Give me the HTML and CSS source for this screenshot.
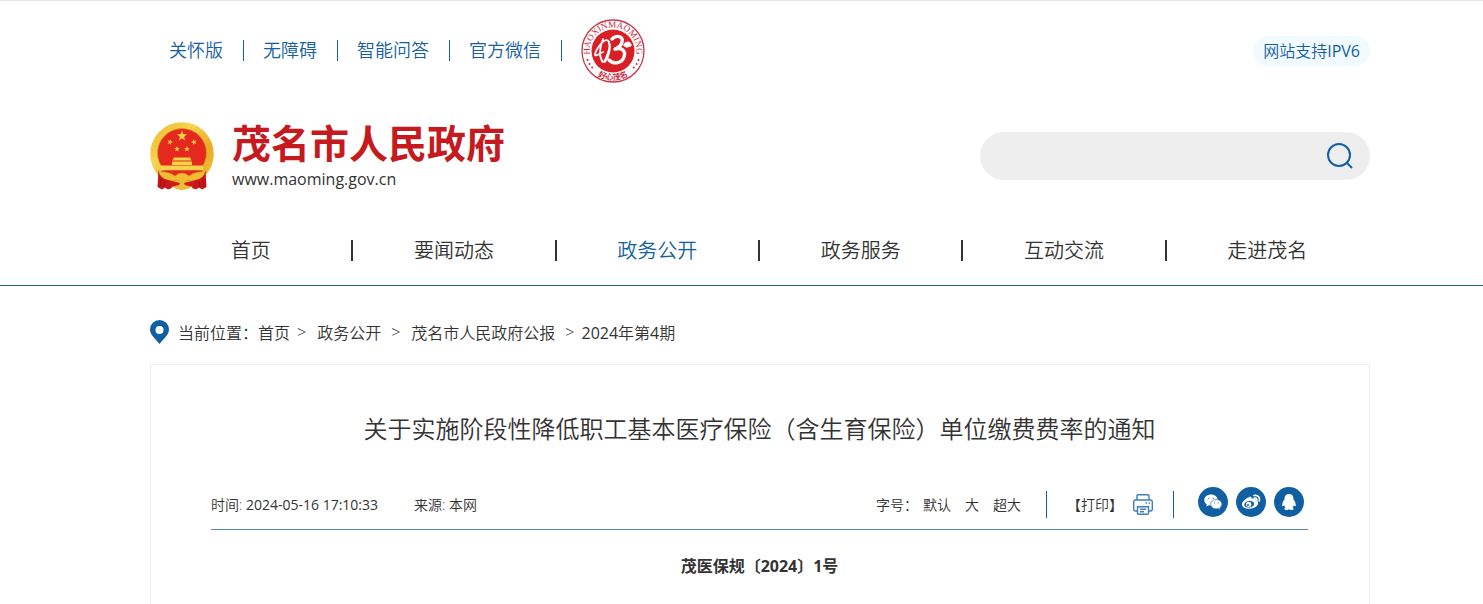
FILE: index.html
```html
<!DOCTYPE html>
<html lang="zh-CN">
<head>
  <meta charset="utf-8">
  <title>关于实施阶段性降低职工基本医疗保险（含生育保险）单位缴费费率的通知</title>
  <link rel="stylesheet" href="styles.css">
</head>
<body>
  <header class="header">
    <div class="wrap topbar">
      <ul class="top-links">
        <li><a href="#">关怀版</a></li>
        <li><a href="#">无障碍</a></li>
        <li><a href="#">智能问答</a></li>
        <li><a href="#">官方微信</a></li>
      </ul>
      <a class="stamp" href="#" aria-label="好心茂名">
        <svg width="64" height="64" viewBox="0 0 64 64">
          <defs>
            <path id="arc-top" d="M9.4 38 A23.4 23.4 0 1 1 54.6 38"/>
            <path id="arc-bottom" d="M11 52.3 A29.2 29.2 0 0 0 53 52.3"/>
          </defs>
          <circle cx="32" cy="32" r="31" fill="#fff" stroke="#c9344c" stroke-width="1.3"/>
          <circle cx="32" cy="32" r="21.5" fill="#d91f26"/>
          <text class="stamp-en"><textPath href="#arc-top" startOffset="50%" text-anchor="middle">HAOXINMAOMING</textPath></text>
          <text class="stamp-cn"><textPath href="#arc-bottom" startOffset="50%" text-anchor="middle">好心茂名</textPath></text>
          <g fill="#c8283c">
            <circle cx="6.5" cy="41" r="1"/><circle cx="8.5" cy="45" r="1"/><circle cx="11.2" cy="48.5" r="1"/>
            <circle cx="57.5" cy="41" r="1"/><circle cx="55.5" cy="45" r="1"/><circle cx="52.8" cy="48.5" r="1"/>
          </g>
          <g fill="none" stroke="#fff" stroke-linecap="round" stroke-linejoin="round">
            <path stroke-width="1.8" d="M22 20 C19 28 18 37 21 42 C22 44 24 42 25 39 C28 32 30 27 28 23 C26 19 22 22 19 26 C16 30 14 33 14 36 C16 38 19 34 22 33"/>
            <path stroke-width="1.8" d="M28 23 C30 29 28 38 24 43"/>
            <path stroke-width="3.4" d="M31 20 C36 15 43 18 41 23 C40 27 37 29 34 30 C41 28 45 32 43 38 C41 44 33 46 28 41"/>
            <path stroke-width="3.4" d="M44 26 C46 23 48 24 49 26 L46 27"/>
          </g>
        </svg>
      </a>
      <a class="ipv6" href="#">网站支持<span class="num">IPV6</span></a>
    </div>

    <div class="wrap brand-row">
      <a class="brand" href="#">
        <svg width="64" height="68" viewBox="0 0 64 68">
          <defs>
            <linearGradient id="gold" x1="0" y1="0" x2="1" y2="1">
              <stop offset="0" stop-color="#edb52c"/>
              <stop offset=".35" stop-color="#f8d651"/>
              <stop offset=".65" stop-color="#e9ae26"/>
              <stop offset="1" stop-color="#f3c43a"/>
            </linearGradient>
            <path id="star" d="M0 -5.4 L1.3 -1.7 5.1 -1.7 2.1 .7 3.2 4.4 0 2.2 -3.2 4.4 -2.1 .7 -5.1 -1.7 -1.3 -1.7Z"/>
          </defs>
          <circle cx="32" cy="32" r="31.8" fill="url(#gold)"/>
          <circle cx="32" cy="32" r="28" fill="none" stroke="#d99b20" stroke-width="1" stroke-dasharray="2 3" opacity=".3"/>
          <circle cx="32" cy="31" r="24.5" fill="#e6291f" stroke="#d8951f" stroke-width=".8"/>
          <g fill="#f8d34a">
            <use href="#star" x="32" y="14"/>
            <use href="#star" transform="translate(20 20) rotate(20) scale(.55)"/>
            <use href="#star" transform="translate(44 20) rotate(-20) scale(.55)"/>
            <use href="#star" transform="translate(27 27) scale(.55)"/>
            <use href="#star" transform="translate(37 27) scale(.55)"/>
            <path d="M24 35.5h16l1.5 3h-19z M22 39.5h20v3.5h-20z M11 43.5h42v5h-42z"/>
          </g>
          <path d="M23 39.2h18" stroke="#d88f1c" stroke-width=".7"/>
          <path d="M11 48.5H53L46 57H18Z" fill="#e6291f"/>
          <path d="M8 50 Q18 49 25 54 Q28 51 32 51 Q36 51 39 54 Q46 49 56 50 L52 55 Q45 61 38 58 L32 60 26 58 Q19 61 12 55Z" fill="#f0bd35" stroke="#d28e1d" stroke-width=".5"/>
          <path d="M8.5 48 Q9 57 20 58.5 L22 66 18 67.5 15 65.5 12 67.5 7.5 65Z M55.5 48 Q55 57 44 58.5 L42 66 46 67.5 49 65.5 52 67.5 56.5 65Z" fill="#c9161b"/>
          <path d="M11 57l-1 8M15 59l-1 6M53 57l1 8M49 59l1 6" stroke="#90100f" stroke-width=".8"/>
          <path d="M23 60 Q32 56 41 60 L43 64 Q37 68 32 68 Q27 68 21 64Z" fill="#efbb32"/>
          <path d="M20 58.5 L30 61 29 63 21 65Z M44 58.5 L34 61 35 63 43 65Z" fill="#cf1a1c"/>
        </svg>
        <span class="brand-text">
          <strong>茂名市人民政府</strong>
          <small>www.maoming.gov.cn</small>
        </span>
      </a>
      <form class="search">
        <input type="text" aria-label="搜索">
        <button type="button" aria-label="搜索">
          <svg width="26" height="26" viewBox="0 0 26 26" fill="none" stroke="#155e9f" stroke-width="2">
            <circle cx="12" cy="12" r="11"/>
            <path d="M19.5 19.5 L25 25"/>
          </svg>
        </button>
      </form>
    </div>

    <nav class="nav">
      <ul class="wrap">
        <li><a href="#">首页</a></li>
        <li><a href="#">要闻动态</a></li>
        <li><a class="active" href="#">政务公开</a></li>
        <li><a href="#">政务服务</a></li>
        <li><a href="#">互动交流</a></li>
        <li><a href="#">走进茂名</a></li>
      </ul>
    </nav>
  </header>

  <main class="wrap">
    <div class="crumbs">
      <svg width="19" height="24" viewBox="0 0 19 24">
        <path fill="#105fa2" fill-rule="evenodd" d="M9.5 0A9.5 9.5 0 0 0 0 9.5C0 15 6 19 9.5 24 13 19 19 15 19 9.5A9.5 9.5 0 0 0 9.5 0ZM9.5 6a4 4 0 1 1 0 8 4 4 0 0 1 0-8Z"/>
      </svg>
      <span>当前位置：</span>
      <a href="#">首页</a><i class="near">&gt;</i>
      <a href="#">政务公开</a><i>&gt;</i>
      <a href="#">茂名市人民政府公报</a><i class="last">&gt;</i>
      <a href="#"><span class="num">2024</span>年第<span class="num">4</span>期</a>
    </div>

    <article class="article">
      <h1>关于实施阶段性降低职工基本医疗保险（含生育保险）单位缴费费率的通知</h1>
      <div class="meta">
        <span class="time">时间: <time class="num">2024-05-16 17:10:33</time></span>
        <span>来源: 本网</span>
        <div class="font-size">
          <span>字号：</span>
          <button type="button">默认</button>
          <button type="button">大</button>
          <button type="button">超大</button>
        </div>
        <button class="print" type="button">
          【打印】
          <svg width="20" height="21" viewBox="0 0 20 21" fill="none" stroke="#3f7fb3" stroke-width="1.4">
            <path d="M4 6V1.7Q4 .7 5 .7H15Q16 .7 16 1.7V6"/>
            <path d="M4 17H2.7Q.7 17 .7 15V8Q.7 6 2.7 6H17.3Q19.3 6 19.3 8V15Q19.3 17 17.3 17H16"/>
            <path d="M4.5 12.7H15.5V19.3Q15.5 20.3 14.5 20.3H5.5Q4.5 20.3 4.5 19.3Z"/>
            <path d="M7 15.3H13M7 17.8H11M12.5 9H14M15.5 9H17"/>
          </svg>
        </button>
        <div class="share">
          <a href="#" aria-label="微信">
            <svg width="30" height="30" viewBox="0 0 30 30">
              <path fill="#fff" d="M13 7.5C9 7.5 6.3 9.9 6.3 13c0 1.8.9 3.3 2.4 4.3L8.3 19.5l2.5-1.2c.7.2 1.4.3 2.2.3C16.8 18.6 19.7 16.1 19.7 13S16.9 7.5 13 7.5Z"/>
              <path fill="#fff" stroke="#105fa2" stroke-width=".6" d="M18.3 12.5c-3.3 0-5.6 2-5.6 4.7s2.3 4.7 5.6 4.7c.7 0 1.3-.1 1.9-.3l2 1.2-.4-2c1.3-.9 2.1-2.1 2.1-3.6 0-2.7-2.4-4.7-5.6-4.7Z"/>
              <g fill="#105fa2"><circle cx="10.8" cy="11.5" r=".6"/><circle cx="15.2" cy="11.5" r=".6"/><circle cx="16.5" cy="15.8" r=".6"/><circle cx="20.2" cy="15.8" r=".6"/></g>
            </svg>
          </a>
          <a href="#" aria-label="微博">
            <svg width="30" height="30" viewBox="0 0 30 30">
              <path fill="#fff" d="M12.8 10.2c1.5-.7 3.3-.5 2.9 1.5 2-.8 4.7-.8 4 1.4 5 1.5 2.3 8.4-6 8.7C9 22 6 20 6 17.2c0-2.5 3.5-5.7 6.8-7Z"/>
              <ellipse cx="13.2" cy="17.2" rx="5" ry="3.3" fill="#105fa2" transform="rotate(-8 13.2 17.2)"/>
              <circle cx="12.7" cy="17.3" r="2.6" fill="#fff"/>
              <circle cx="12" cy="18" r="1" fill="#105fa2"/>
              <path fill="none" stroke="#fff" stroke-width="1.8" stroke-linecap="round" d="M18 8.5c3.8-1 6.5 2 5.3 5.3M18.5 11.2c1.7-.4 2.8.8 2.2 2.4"/>
            </svg>
          </a>
          <a href="#" aria-label="QQ">
            <svg width="30" height="30" viewBox="0 0 30 30">
              <path fill="#fff" d="M15 7c-3 0-4.7 2.2-4.5 5.5C9 14.5 8 16.5 8.2 18.8c.2 1 1.2.3 1.9-.8.2 1 .7 1.9 1.4 2.5-1 .4-1.3 1-1 1.7.6 1 3.6.8 4.5 0 .9.8 3.9 1 4.5 0 .3-.7 0-1.3-1-1.7.7-.6 1.2-1.5 1.4-2.5.7 1.1 1.7 1.8 1.9.8.2-2.3-.8-4.3-2.3-6.3C19.7 9.2 18 7 15 7Z"/>
            </svg>
          </a>
        </div>
      </div>
      <p class="doc-no">茂医保规〔2024〕1号</p>
    </article>
  </main>
</body>
</html>
```
FILE: styles.css
```css
:root {
  --blue: #155e9f;
  --text: #333;
}

* {
  box-sizing: border-box;
  margin: 0;
  padding: 0;
}

body {
  background: #fff;
  color: var(--text);
  font-family: 'Open Sans', 'Noto Sans CJK SC', sans-serif;
  font-size: 16px;
  font-weight: 350;
}

ul {
  list-style: none;
}

a {
  color: inherit;
  text-decoration: none;
}

button {
  background: none;
  border: none;
  color: inherit;
  font: inherit;
  cursor: pointer;
}

svg {
  display: block;
}

.wrap {
  margin: 0 113px 0 150px;
}

.num {
  font-weight: 400;
}

/* Header */
.header {
  border-top: 1px solid #e4e4e4;
}

.topbar {
  display: flex;
  align-items: center;
  height: 99px;
}

.top-links {
  display: flex;
  color: var(--blue);
  font-size: 18px;
  line-height: 21px;
}

.top-links li {
  padding: 0 20px 0 19px;
  border-right: 1px solid var(--blue);
}

.stamp {
  margin-left: 19px;
}

.stamp-en {
  fill: #c8283c;
  font: 9px 'Liberation Serif', serif;
}

.stamp-cn {
  fill: #c8283c;
  font: bold 8px 'Noto Sans CJK SC', sans-serif;
}

.ipv6 {
  margin-left: auto;
  padding: 0 10px;
  border-radius: 15px;
  background: #f1faff;
  color: var(--blue);
  line-height: 30px;
}

.brand-row {
  display: flex;
  justify-content: space-between;
  align-items: center;
  padding: 22px 0 26px;
}

.brand {
  display: flex;
  gap: 18px;
}

.brand-text {
  display: flex;
  flex-direction: column;
}

.brand-text strong {
  color: #c41a20;
  font-size: 39px;
  font-weight: 700;
  line-height: 42px;
}

.brand-text small {
  font-size: 16px;
  font-weight: 400;
  line-height: 30px;
  height: 26px;
}

.search {
  display: flex;
  width: 390px;
  height: 48px;
  padding: 0 17px 0 24px;
  border-radius: 24px;
  background: #eee;
}

.search input {
  flex: 1;
  border: none;
  outline: none;
  background: none;
  font: inherit;
}

.nav {
  border-bottom: 1px solid #236679;
}

.nav ul {
  display: flex;
}

.nav li {
  display: flex;
  flex: 1;
  align-items: center;
  justify-content: center;
  font-size: 20px;
  line-height: 69px;
}

.nav a {
  flex: 1;
  text-align: center;
}

.nav li::after {
  content: '';
  width: 2px;
  height: 21px;
  background: #333;
}

.nav li:last-child::after {
  background: none;
}

.nav .active {
  color: var(--blue);
}

/* Breadcrumb */
.crumbs {
  display: flex;
  align-items: center;
  height: 78px;
  padding-top: 14px;
}

.crumbs svg {
  margin-right: 9px;
}

.crumbs i {
  margin: 0 11px 0 10px;
  font-style: normal;
}

.crumbs .near {
  margin-left: 7px;
}

.crumbs .last {
  margin-right: 7px;
}

/* Article */
.article {
  padding: 44px 61px 44px 60px;
  border: 1px solid #eee;
}

.article h1 {
  font-size: 24px;
  font-weight: 350;
  line-height: 40px;
  text-align: center;
}

.meta {
  display: flex;
  height: 43px;
  margin-top: 38px;
  border-bottom: 1px solid #5489ae;
  font-size: 14px;
  line-height: 36px;
}

.time {
  margin-right: 36px;
}

.font-size {
  display: flex;
  align-items: flex-start;
  gap: 14px;
  margin-left: auto;
}

.font-size span {
  margin-right: -9px;
}

.print {
  display: flex;
  align-items: center;
  gap: 10px;
  height: 27px;
  margin: 4px 24px 0 25px;
  padding: 0 20px;
  border: solid var(--blue);
  border-width: 0 1px;
}

.share {
  display: flex;
  gap: 8px;
  padding-right: 4px;
}

.share a {
  width: 30px;
  height: 30px;
  border-radius: 50%;
  background: #105fa2;
}

.doc-no {
  padding-top: 20px;
  font-weight: 700;
  line-height: 32px;
  text-align: center;
}
```
